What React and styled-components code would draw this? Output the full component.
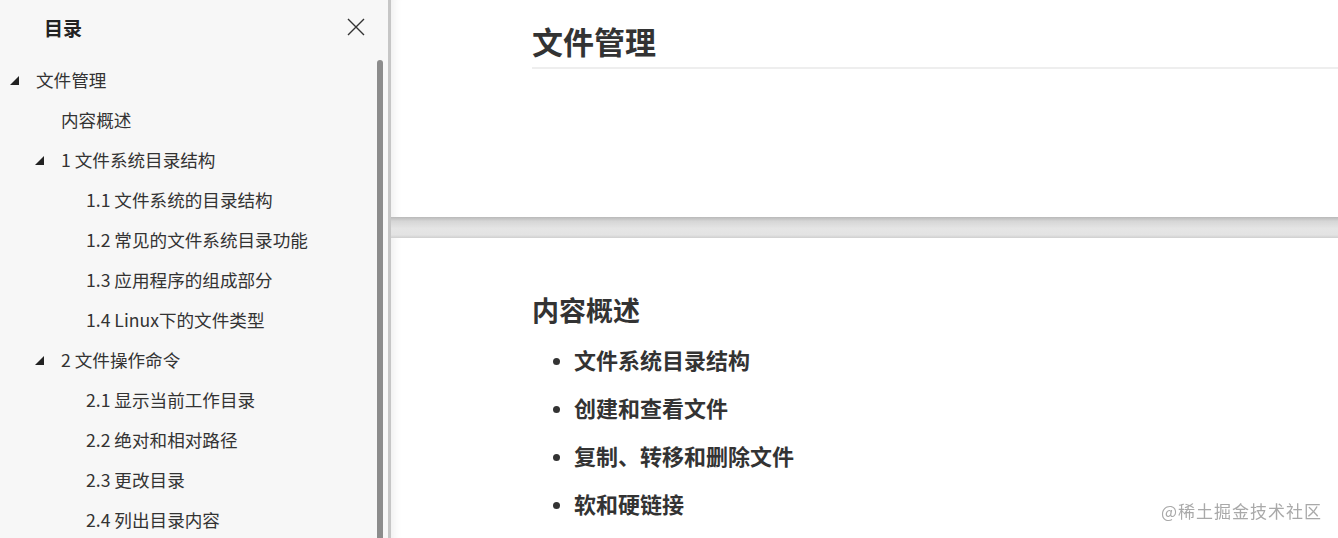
import React from "react";
import styled, { createGlobalStyle } from "styled-components";

const Global = createGlobalStyle`
  html, body { margin: 0; padding: 0; }
  body {
    width: 1338px;
    height: 538px;
    overflow: hidden;
    font-family: "Noto Sans CJK SC", "Noto Sans", sans-serif;
    color: #333;
  }
`;

const toc = [
  { level: 1, text: "文件管理", open: true },
  { level: 2, text: "内容概述" },
  { level: 2, text: "1 文件系统目录结构", open: true },
  { level: 3, text: "1.1 文件系统的目录结构" },
  { level: 3, text: "1.2 常见的文件系统目录功能" },
  { level: 3, text: "1.3 应用程序的组成部分" },
  { level: 3, text: "1.4 Linux下的文件类型" },
  { level: 2, text: "2 文件操作命令", open: true },
  { level: 3, text: "2.1 显示当前工作目录" },
  { level: 3, text: "2.2 绝对和相对路径" },
  { level: 3, text: "2.3 更改目录" },
  { level: 3, text: "2.4 列出目录内容" },
];

const points = ["文件系统目录结构", "创建和查看文件", "复制、转移和删除文件", "软和硬链接"];

const Layout = styled.div`
  display: flex;
  height: 538px;
`;

const Sidebar = styled.aside`
  position: relative;
  width: 388px;
  flex: none;
  background: #f7f7f7;
  border-right: 3px solid #c6c6c6;
  overflow: hidden;
`;

const SideHead = styled.div`
  display: flex;
  align-items: center;
  justify-content: space-between;
  height: 54px;
  padding: 0 22px 0 44px;
  box-sizing: border-box;
`;

const SideTitle = styled.h2`
  margin: 0;
  font-size: 19px;
  font-weight: 700;
  color: #222;
`;

const Close = styled.button`
  border: 0;
  background: none;
  padding: 0;
  width: 20px;
  height: 20px;
  display: flex;
  cursor: pointer;
`;

const TocList = styled.ul`
  list-style: none;
  margin: 6px 0 0;
  padding: 0;
`;

const TocItem = styled.li`
  position: relative;
  height: 40px;
  line-height: 40px;
  font-size: 17.6px;
  color: #333;
  white-space: nowrap;
  padding-left: ${(p) => (p.$level === 1 ? 36 : p.$level === 2 ? 61 : 86)}px;
`;

const Caret = styled.span`
  position: absolute;
  left: ${(p) => (p.$level === 1 ? 10 : 35)}px;
  top: 16px;
  width: 0;
  height: 0;
  border-style: solid;
  border-width: 0 0 9px 9px;
  border-color: transparent transparent #222 transparent;
`;

const Thumb = styled.div`
  position: absolute;
  left: 377px;
  top: 60px;
  bottom: 0;
  width: 6px;
  border-radius: 3px 3px 0 0;
  background: #8c8c8c;
`;

const Main = styled.main`
  flex: 1;
  display: flex;
  flex-direction: column;
  background: #fff;
  box-shadow: inset 10px 0 10px -8px rgba(0, 0, 0, 0.08);
`;

const Page = styled.section`
  padding: 0 0 0 141px;
  height: ${(p) => p.$h}px;
  flex: none;
  box-sizing: border-box;
`;

const Gap = styled.div`
  height: 21px;
  flex: none;
  background: linear-gradient(#b9b9b9 0%, #d6d6d6 20%, #e5e5e5 55%, #e3e3e3 85%, #cfcfcf 100%);
`;

const H1 = styled.h1`
  margin: 0;
  padding-top: 19px;
  font-size: 31px;
  line-height: 44px;
  font-weight: 700;
  color: #333;
  border-bottom: 2px solid #eeeeee;
  padding-bottom: 4px;
`;

const H2 = styled.h2`
  margin: 0;
  padding-top: 52px;
  font-size: 27px;
  line-height: 40px;
  font-weight: 700;
  color: #333;
`;

const Points = styled.ul`
  margin: 5px 0 0;
  padding-left: 42px;
  list-style: disc;
`;

const Point = styled.li`
  font-size: 22px;
  font-weight: 700;
  line-height: 48px;
  color: #333;
  &::marker { font-size: 18px; }
`;

const Watermark = styled.div`
  position: fixed;
  right: 16px;
  bottom: 15px;
  font-size: 17px;
  color: #a9a9a9;
  letter-spacing: 1px;
`;

export default function App() {
  return (
    <>
      <Global />
      <Layout>
        <Sidebar>
          <SideHead>
            <SideTitle>目录</SideTitle>
            <Close aria-label="关闭">
              <svg width="20" height="20" viewBox="0 0 20 20">
                <path d="M2 2 L18 18 M18 2 L2 18" stroke="#333" strokeWidth="1.4" fill="none" />
              </svg>
            </Close>
          </SideHead>
          <TocList>
            {toc.map((t) => (
              <TocItem key={t.text} $level={t.level}>
                {t.open && <Caret $level={t.level} />}
                {t.text}
              </TocItem>
            ))}
          </TocList>
          <Thumb />
        </Sidebar>
        <Main>
          <Page $h={217}>
            <H1>文件管理</H1>
          </Page>
          <Gap />
          <Page $h={300}>
            <H2>内容概述</H2>
            <Points>
              {points.map((p) => (
                <Point key={p}>{p}</Point>
              ))}
            </Points>
          </Page>
        </Main>
      </Layout>
      <Watermark>@稀土掘金技术社区</Watermark>
    </>
  );
}
